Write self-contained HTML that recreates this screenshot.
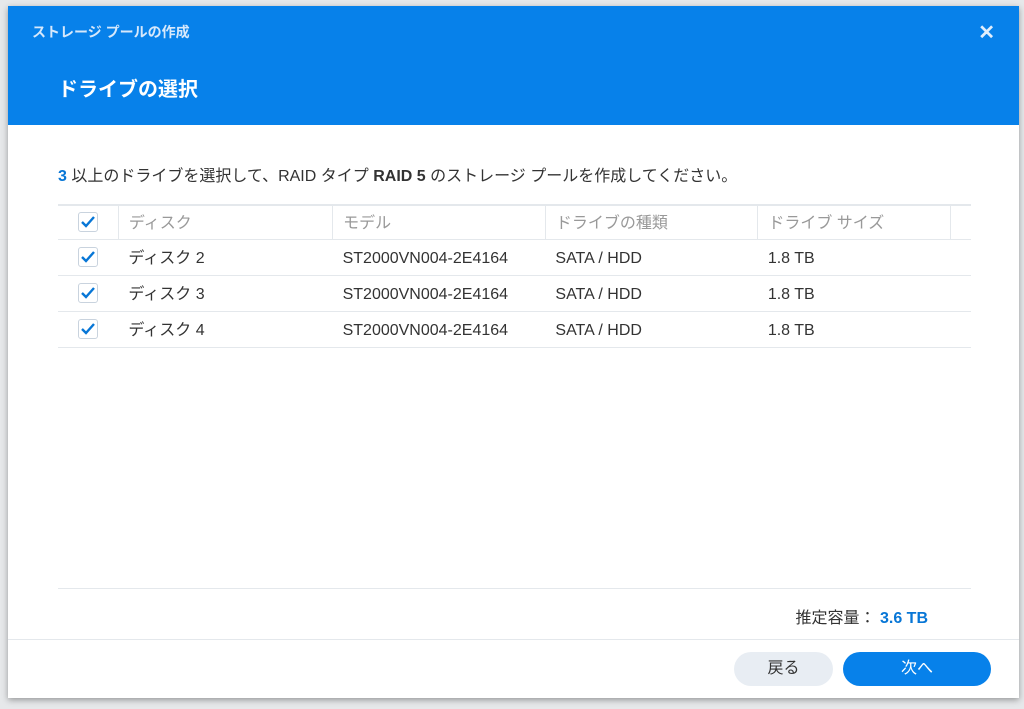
<!DOCTYPE html>
<html><head><meta charset="utf-8"><style>
body{margin:0;width:1024px;height:709px;background:#e6e8ea;position:relative;overflow:hidden;font-family:"Liberation Sans","Noto Sans CJK JP",sans-serif;}
.dlg{position:absolute;left:8px;top:6px;width:1011px;height:692px;background:#fff;box-shadow:0 2px 6px rgba(0,0,0,.35);overflow:hidden}
.hd{height:119px;background:#0781ea;color:#fff;position:relative}
.t1{position:absolute;left:24px;top:16px;font-size:14px;font-weight:bold;color:#d6e8fb}
.t2{position:absolute;left:50px;top:67px;font-size:20px;font-weight:bold}
.x{position:absolute;right:24px;top:14px;font-size:20px;color:#e0eefc;font-weight:bold}
.msg{position:absolute;left:50px;top:156px;font-size:16px;color:#333}
.b{color:#0776d6;font-weight:bold}
table{position:absolute;left:50px;top:198px;width:913px;border-collapse:collapse;font-size:16px;color:#333}
td{height:35px;border-bottom:1px solid #e4e8ec;padding:0 10px}
td>div{height:35px;line-height:37px;overflow:hidden;white-space:nowrap}
tr.h td{color:#999;border-top:2px solid #e4e8ec;height:33px}
tr.h td>div{height:33px;line-height:35px}
tr.h td+td{border-left:1px solid #e4e8ec}
.cb{width:18px;height:18px;border:1px solid #c9d3de;border-radius:3px;display:inline-block;vertical-align:middle;position:relative;margin-left:10px;top:-2px}
.cb svg{position:absolute;left:1px;top:2px}
.ln{position:absolute;left:50px;top:582px;width:913px;border-top:1px solid #e4e8ec}
.cap{position:absolute;right:91px;top:598px;font-size:16px;color:#333}
.ft{position:absolute;left:0;top:633px;width:100%;border-top:1px solid #e4e8ec}
.btn{position:absolute;top:646px;height:34px;border-radius:17px;font-size:16px;text-align:center;line-height:34px}
</style></head><body>
<div class="dlg">
<div class="hd"><div class="t1">ストレージ プールの作成</div><div class="t2">ドライブの選択</div><div class="x">✕</div></div>
<div class="msg"><span class="b">3</span> 以上のドライブを選択して、RAID タイプ <b>RAID 5</b> のストレージ プールを作成してください。</div>
<table>
<tr class="h"><td style="width:40px"><div><span class="cb"><svg width="16" height="14" viewBox="0 0 16 14"><path d="M2 7l4 4 8-9" stroke="#0776d6" stroke-width="2.4" fill="none"/></svg></span></div></td><td style="width:194px"><div>ディスク</div></td><td style="width:192px"><div>モデル</div></td><td style="width:192px"><div>ドライブの種類</div></td><td style="width:172px"><div>ドライブ サイズ</div></td><td></td></tr>
<tr><td><div><span class="cb"><svg width="16" height="14" viewBox="0 0 16 14"><path d="M2 7l4 4 8-9" stroke="#0776d6" stroke-width="2.4" fill="none"/></svg></span></div></td><td><div>ディスク 2</div></td><td><div>ST2000VN004-2E4164</div></td><td><div>SATA / HDD</div></td><td><div>1.8 TB</div></td><td></td></tr>
<tr><td><div><span class="cb"><svg width="16" height="14" viewBox="0 0 16 14"><path d="M2 7l4 4 8-9" stroke="#0776d6" stroke-width="2.4" fill="none"/></svg></span></div></td><td><div>ディスク 3</div></td><td><div>ST2000VN004-2E4164</div></td><td><div>SATA / HDD</div></td><td><div>1.8 TB</div></td><td></td></tr>
<tr><td><div><span class="cb"><svg width="16" height="14" viewBox="0 0 16 14"><path d="M2 7l4 4 8-9" stroke="#0776d6" stroke-width="2.4" fill="none"/></svg></span></div></td><td><div>ディスク 4</div></td><td><div>ST2000VN004-2E4164</div></td><td><div>SATA / HDD</div></td><td><div>1.8 TB</div></td><td></td></tr>
</table>
<div class="ln"></div>
<div class="cap">推定容量： <span class="b">3.6 TB</span></div>
<div class="ft"></div>
<div class="btn" style="left:726px;width:99px;background:#e8edf3;color:#333;top:646px">戻る</div>
<div class="btn" style="left:835px;width:148px;background:#0781ea;color:#fff">次へ</div>
</div>
</body></html>
